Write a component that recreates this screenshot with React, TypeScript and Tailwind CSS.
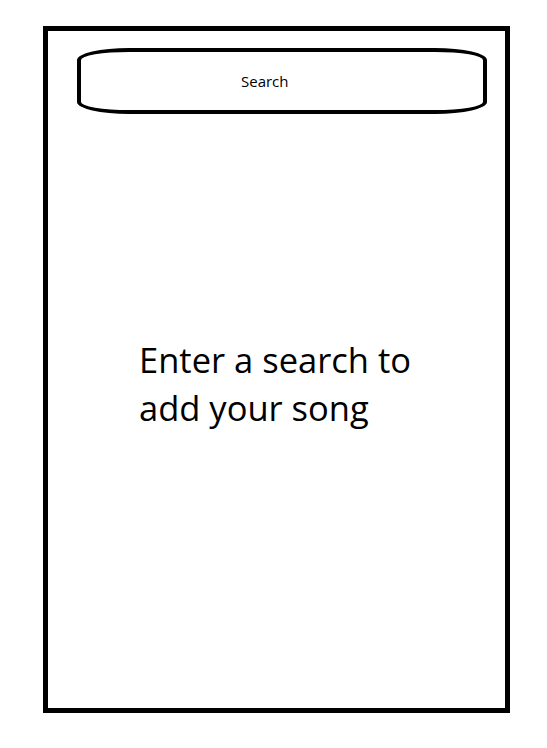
export default function App() {
  return (
    <div className="w-[547px] h-[748px] bg-white pt-[26px] pl-[43px] font-['Open_Sans',sans-serif]">
      <div className="w-[467px] h-[687px] border-[5px] border-black flex flex-col">
        <div className="ml-[29px] mt-[17px] w-[410px] h-[66px] border-[4px] border-black rounded-[52px_/_12px] flex items-center pl-[160px]">
          <span className="text-[15px] leading-none text-black">Search</span>
        </div>
        <div className="ml-[91px] mt-[222px] text-[34.5px] leading-[48px] text-black">
          <div>Enter a search to</div>
          <div>add your song</div>
        </div>
      </div>
    </div>
  );
}
